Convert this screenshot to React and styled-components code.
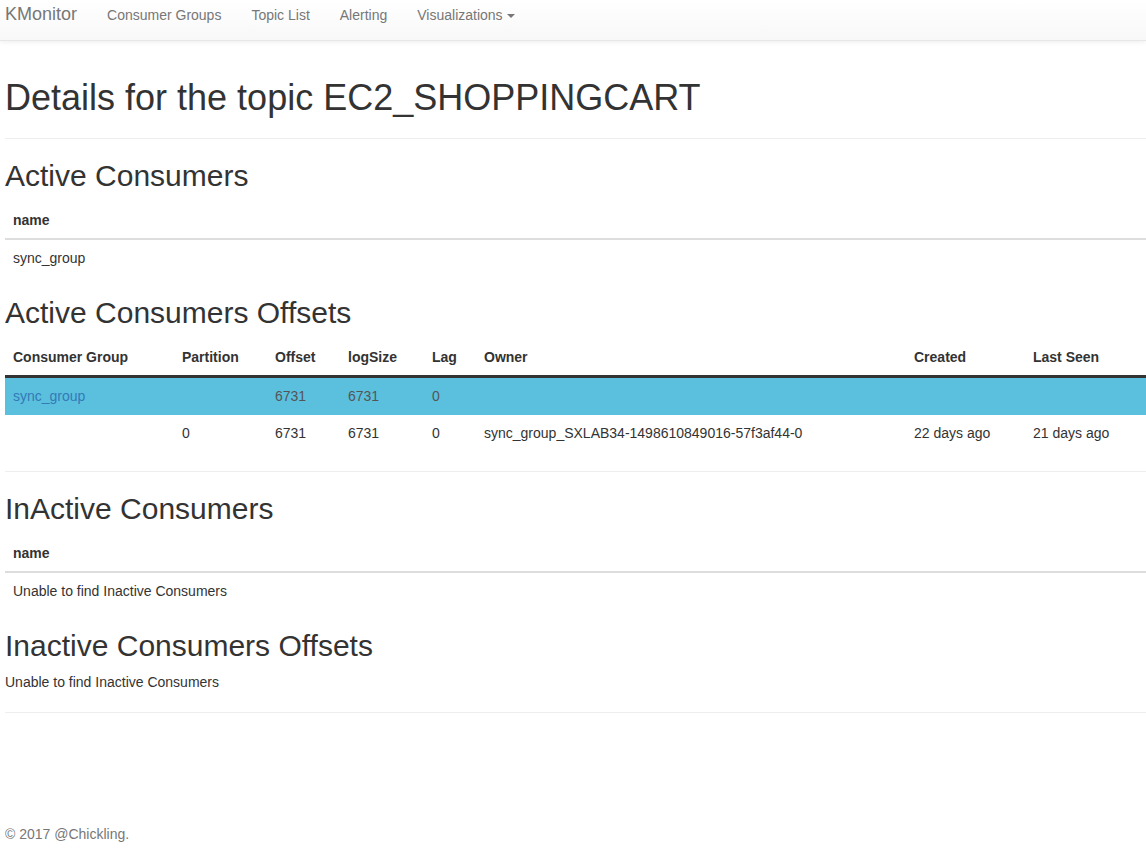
import styled, {createGlobalStyle, css} from 'styled-components';

const GlobalStyle = createGlobalStyle`
    html, body {
        margin: 0;
        padding: 0;
        background: #fff;
    }
    body {
        font-family: "Liberation Sans", Arial, sans-serif;
        font-size: 14px;
        line-height: 20px;
        color: #333;
        overflow: hidden;
    }
    * {
        box-sizing: border-box;
    }
`;

const offsetColumns = [
    {label: 'Consumer Group', width: 169},
    {label: 'Partition', width: 93},
    {label: 'Offset', width: 73},
    {label: 'logSize', width: 84},
    {label: 'Lag', width: 52},
    {label: 'Owner', width: 430},
    {label: 'Created', width: 119},
    {label: 'Last Seen'},
];

const offsetRows = [
    {group: 'sync_group', partition: '', offset: '6731', logSize: '6731', lag: '0', owner: '', created: '', lastSeen: '', highlight: true},
    {group: '', partition: '0', offset: '6731', logSize: '6731', lag: '0', owner: 'sync_group_SXLAB34-1498610849016-57f3af44-0', created: '22 days ago', lastSeen: '21 days ago'},
];

export default function App () {
    return (
        <>
            <GlobalStyle />
            <NavBar>
                <Brand href="#">KMonitor</Brand>
                <NavLink href="#">Consumer Groups</NavLink>
                <NavLink href="#">Topic List</NavLink>
                <NavLink href="#">Alerting</NavLink>
                <NavLink href="#">Visualizations<Caret /></NavLink>
            </NavBar>
            <Main>
                <PageHeader>
                    <Title>Details for the topic EC2_SHOPPINGCART</Title>
                </PageHeader>

                <SectionTitle>Active Consumers</SectionTitle>
                <Table>
                    <thead>
                        <tr><Th>name</Th></tr>
                    </thead>
                    <tbody>
                        <tr><Td>sync_group</Td></tr>
                    </tbody>
                </Table>

                <SectionTitle>Active Consumers Offsets</SectionTitle>
                <Table $fixed>
                    <colgroup>
                        {offsetColumns.map((c) => (
                            <col key={c.label} style={c.width ? {width: c.width} : undefined} />
                        ))}
                    </colgroup>
                    <thead>
                        <tr>
                            {offsetColumns.map((c) => (
                                <Th key={c.label} $dark>{c.label}</Th>
                            ))}
                        </tr>
                    </thead>
                    <tbody>
                        {offsetRows.map((r, i) => (
                            <Row key={i} $highlight={r.highlight}>
                                <Td>{r.group && <GroupLink href="#">{r.group}</GroupLink>}</Td>
                                <Td>{r.partition}</Td>
                                <Td>{r.offset}</Td>
                                <Td>{r.logSize}</Td>
                                <Td>{r.lag}</Td>
                                <Td>{r.owner}</Td>
                                <Td>{r.created}</Td>
                                <Td>{r.lastSeen}</Td>
                            </Row>
                        ))}
                    </tbody>
                </Table>
                <Divider />

                <SectionTitle>InActive Consumers</SectionTitle>
                <Table>
                    <thead>
                        <tr><Th>name</Th></tr>
                    </thead>
                    <tbody>
                        <tr><Td>Unable to find Inactive Consumers</Td></tr>
                    </tbody>
                </Table>

                <SectionTitle>Inactive Consumers Offsets</SectionTitle>
                <Message>Unable to find Inactive Consumers</Message>
                <Divider />
            </Main>
            <Footer>© 2017 @Chickling.</Footer>
        </>
    );
};

const NavBar = styled.nav`
    display: flex;
    align-items: flex-start;
    height: 41px;
    padding-left: 5px;
    background-image: linear-gradient(to bottom, #fff 0, #f8f8f8 100%);
    border-bottom: 1px solid #e7e7e7;
    box-shadow: 0 1px 5px rgba(0, 0, 0, 0.075);
`;

const Brand = styled.a`
    padding: 4px 15px 0 0;
    font-size: 18px;
    line-height: 20px;
    color: #777;
    text-decoration: none;
`;

const NavLink = styled.a`
    padding: 5px 15px 0;
    line-height: 20px;
    color: #777;
    text-decoration: none;
`;

const Caret = styled.span`
    display: inline-block;
    width: 0;
    height: 0;
    margin-left: 4px;
    vertical-align: middle;
    border-top: 4px solid #777;
    border-left: 4px solid transparent;
    border-right: 4px solid transparent;
`;

const Main = styled.main`
    padding-left: 5px;
`;

const PageHeader = styled.div`
    margin-bottom: 20px;
    padding-bottom: 10px;
    border-bottom: 1px solid #eee;
`;

const Title = styled.h1`
    margin: 37px 0 10px;
    font-size: 36px;
    font-weight: 500;
    line-height: 40px;
    color: #333;
`;

const SectionTitle = styled.h2`
    margin: 18px 0 10px;
    font-size: 30px;
    font-weight: 500;
    line-height: 33px;
    color: #333;
`;

const Table = styled.table`
    width: 100%;
    border-collapse: collapse;
    border-spacing: 0;
    margin-bottom: 20px;
    ${(p) => p.$fixed && css`
        table-layout: fixed;
    `}
`;

const Th = styled.th`
    padding: 8px;
    text-align: left;
    font-weight: bold;
    line-height: 20px;
    vertical-align: bottom;
    border-bottom: ${(p) => (p.$dark ? '3px solid #333' : '2px solid #ddd')};
    white-space: nowrap;
`;

const Td = styled.td`
    padding: 8px;
    line-height: 20px;
    vertical-align: top;
    white-space: nowrap;
`;

const Row = styled.tr`
    background: ${(p) => (p.$highlight ? '#5bc0de' : 'transparent')};
    color: ${(p) => (p.$highlight ? '#555' : '#333')};
    ${(p) => p.$highlight && css`
        ${Td} {
            padding-bottom: 9px;
        }
    `}
    & + & ${Td} {
        border-top: 1px solid #ddd;
    }
`;

const GroupLink = styled.a`
    color: #337ab7;
    text-decoration: none;
`;

const Divider = styled.hr`
    margin: 0 0 20px;
    border: 0;
    border-top: 1px solid #eee;
`;

const Message = styled.p`
    margin: 0 0 20px;
`;

const Footer = styled.footer`
    padding: 91px 0 0 5px;
    color: #777;
`;
